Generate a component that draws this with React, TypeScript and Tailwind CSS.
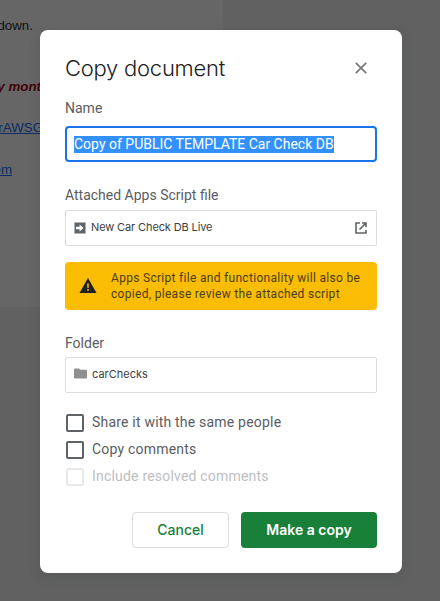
import { useState } from "react";

function Checkbox({ label, disabled = false }: { label: string; disabled?: boolean }) {
  const [checked, setChecked] = useState(false);
  return (
    <label className={`flex h-[27px] items-center ${disabled ? "text-[#bdbebf]" : "text-[#5a5c5f]"}`}>
      <input
        type="checkbox"
        disabled={disabled}
        checked={checked}
        onChange={() => setChecked(!checked)}
        className={`mr-2 ml-px size-[18px] appearance-none rounded-[2px] border-2 checked:bg-[#188038] ${disabled ? "border-[#e8e8e8]" : "border-[#5f6368]"}`}
      />
      <span className="-mt-px whitespace-nowrap text-[14px] leading-5 tracking-[0.2px]">{label}</span>
    </label>
  );
}

export default function App() {
  return (
    <div className="relative h-[601px] w-[440px] overflow-hidden bg-[#616161] font-['Roboto',sans-serif]">
      <div className="flex h-[307px] w-[223px] flex-col bg-[#666666] font-['Liberation_Sans',sans-serif] text-[13.33px] leading-[16px]">
        <div className="mt-[18px] w-[33px] self-start">
          <span className="float-right whitespace-nowrap text-[#111]">down.</span>
        </div>
        <div className="mt-[45px] w-[41px] self-start">
          <span className="float-right whitespace-nowrap font-bold text-[#450008] italic">y mont</span>
        </div>
        <div className="mt-[25px] w-[43px] self-start">
          <span className="float-right whitespace-nowrap text-[#0a2c66] underline">rAWSG</span>
        </div>
        <div className="mt-[26px] w-[12px] self-start">
          <span className="float-right whitespace-nowrap text-[#0a2c66] underline">em</span>
        </div>
      </div>

      <section
        role="dialog"
        aria-label="Copy document"
        className="absolute top-[30px] left-[40px] flex h-[543px] w-[362px] flex-col rounded-lg bg-white px-[25px] pt-[22px] shadow-[0_4px_8px_3px_rgba(60,64,67,0.15)]"
      >
        <header className="flex h-8 items-center justify-between">
          <h1 className="whitespace-nowrap font-['Inter',sans-serif] text-[22px] leading-8 font-light tracking-[-0.25px] text-[#202124]">Copy document</h1>
          <button aria-label="Close" className="mr-[10px]">
            <svg width="12" height="12" viewBox="0 0 12 12" fill="none" stroke="#77797a" strokeWidth="1.7">
              <path d="M.8.8 11.2 11.2M11.2.8.8 11.2" />
            </svg>
          </button>
        </header>

        <div className="mt-[14px] text-[14px] leading-5 text-[#5a5c5f]">Name</div>
        <div className="mt-2 flex h-9 shrink-0 items-center rounded-[4px] border-2 border-[#1a73e8] px-[7px]">
          <span className="h-[17px] whitespace-nowrap bg-[#3390ff] text-[14px] leading-[17px] text-white">
            Copy of PUBLIC TEMPLATE Car Check DB
          </span>
        </div>

        <div className="mt-[23px] text-[14px] leading-5 text-[#5a5c5f]">Attached Apps Script file</div>
        <div className="mt-[5px] flex h-9 shrink-0 items-center rounded-[2px] border border-[#dadce0] pr-[9px] pl-[8px]">
          <svg width="12" height="12" viewBox="0 0 12 12">
            <path d="M.5.5h11v11H.5z" fill="#5f6368" />
            <path d="M2 4.8h3.6V2.5L9.5 6 5.6 9.5V7.2H2z" fill="#fff" />
          </svg>
          <span className="-mt-0.5 ml-[5px] whitespace-nowrap font-['Inter',sans-serif] text-[11px] leading-4 tracking-[-0.12px] text-[#3c4043]">New Car Check DB Live</span>
          <svg width="12" height="12" viewBox="0 0 12 12" fill="none" stroke="#5f6368" strokeWidth="1.6" className="-mt-px ml-auto">
            <path d="M5 1H1v10h10V8M7 1h4v4M11 1 4.5 7.5" />
          </svg>
        </div>

        <div className="mt-4 flex h-12 shrink-0 items-center rounded-[4px] bg-[#fbbc04] pl-[14px]">
          <svg width="18" height="16" viewBox="0 0 18 16">
            <path d="M9 0 17.5 15H.5z" fill="#202124" />
            <path d="M8.2 5.6h1.6v4.2H8.2zM8.2 11h1.6v1.7H8.2z" fill="#fbbc04" />
          </svg>
          <p className="ml-[14px] whitespace-nowrap text-[12px] leading-4 tracking-[0.3px] text-[#4a3e1b]">
            Apps Script file and functionality will also be
            <br />
            copied, please review the attached script
          </p>
        </div>

        <div className="mt-[23px] text-[14px] leading-5 text-[#5a5c5f]">Folder</div>
        <div className="mt-1 flex h-9 shrink-0 items-center rounded-[2px] border border-[#dadce0] px-[8px]">
          <svg width="13" height="11" viewBox="0 0 13 11" className="-mt-[3px]">
            <path d="M1.2.5H5L6.4 1.8h5.4q1.2 0 1.2 1.2v6.5q0 1-1 1H1q-1 0-1-1v-8q0-1 1.2-1" fill="#8f8f8f" />
          </svg>
          <span className="-mt-0.5 ml-[5px] whitespace-nowrap font-['Inter',sans-serif] text-[11px] leading-4 text-[#3c4043]">carChecks</span>
        </div>

        <div className="mt-[16px] flex flex-col">
          <Checkbox label="Share it with the same people" />
          <Checkbox label="Copy comments" />
          <Checkbox label="Include resolved comments" disabled />
        </div>

        <footer className="mt-[22px] flex shrink-0 justify-end gap-3 font-['Inter',sans-serif] text-[14px]">
          <button className="h-9 w-[97px] rounded-[4px] border border-[#dadce0] pb-0.5 font-medium text-[#188038]">Cancel</button>
          <button className="h-9 w-[136px] rounded-[4px] bg-[#188038] pb-0.5 font-semibold text-white">Make a copy</button>
        </footer>
      </section>
    </div>
  );
}
